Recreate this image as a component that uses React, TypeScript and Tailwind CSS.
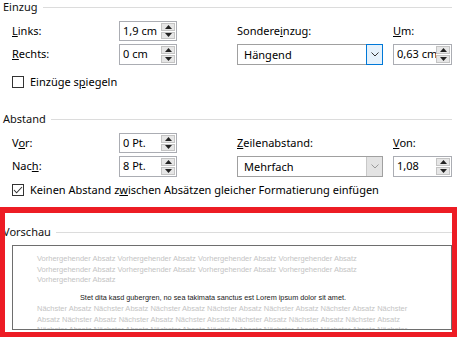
import React from "react";

const ui = "font-['Noto_Sans','Liberation_Sans',sans-serif]";

function GroupHeader({ title }: { title: string }) {
  return (
    <div className="flex items-center h-[14px]">
      <span className="pl-[3px] pr-[5px] leading-[14px] text-[#111]">{title}</span>
      <div className="flex-1 h-px bg-[#dcdcdc]" />
    </div>
  );
}

function Arrow({ up }: { up?: boolean }) {
  return (
    <svg width="7" height="4" viewBox="0 0 7 4">
      <polygon points={up ? "0,4 7,4 3.5,0" : "0,0 7,0 3.5,4"} fill="#222" />
    </svg>
  );
}

function SpinBox({ value }: { value: string }) {
  return (
    <div className="h-full flex border border-[#abadb3] bg-white">
      <span className="flex-1 pl-[3px] leading-[18px] whitespace-nowrap overflow-hidden">{value}</span>
      <div className="w-[15px] flex flex-col gap-px py-px pr-px">
        <div className="flex-1 flex items-center justify-center bg-[#e6e6e6] border border-[#c4c4c4]">
          <Arrow up />
        </div>
        <div className="flex-1 flex items-center justify-center bg-[#e6e6e6] border border-[#c4c4c4]">
          <Arrow />
        </div>
      </div>
    </div>
  );
}

function Chevron({ color }: { color: string }) {
  return (
    <svg width="8" height="5" viewBox="0 0 8 5">
      <polyline points="0.5,0.5 4,4 7.5,0.5" fill="none" stroke={color} strokeWidth="1" />
    </svg>
  );
}

function Dropdown({ value, active }: { value: string; active?: boolean }) {
  return (
    <div className="h-full flex border border-[#a0a0a0] bg-white">
      <span className="flex-1 pl-[6px] leading-[19px]">{value}</span>
      {active ? (
        <div className="w-[17px] -my-px -mr-px flex items-center justify-center bg-[#e5f1fb] border border-[#0078d7]">
          <Chevron color="#333" />
        </div>
      ) : (
        <div className="w-[16px] flex items-center justify-center bg-[#e3e3e3] border-l border-[#c8c8c8]">
          <Chevron color="#999" />
        </div>
      )}
    </div>
  );
}

function Checkbox({ checked, children }: { checked?: boolean; children: React.ReactNode }) {
  return (
    <div className="flex items-center pl-[12px] h-[12px] gap-[6px]">
      <div className="w-[12px] h-[12px] border border-[#333] bg-white flex items-center justify-center">
        {checked && (
          <svg width="10" height="8" viewBox="0 0 10 8">
            <polyline points="1,4 3.6,6.8 9,1" fill="none" stroke="#333" strokeWidth="1.1" />
          </svg>
        )}
      </div>
      <span className="leading-[14px] whitespace-nowrap">{children}</span>
    </div>
  );
}

const cols = "grid grid-cols-[107px_58px_60px_146px_10px_59px] pl-[12px] items-center";

const prev = "Vorhergehender Absatz Vorhergehender Absatz Vorhergehender Absatz Vorhergehender Absatz";
const next1 = "Nächster Absatz Nächster Absatz Nächster Absatz Nächster Absatz Nächster Absatz Nächster Absatz Nächster";
const next2 = "Absatz Nächster Absatz Nächster Absatz Nächster Absatz Nächster Absatz Nächster Absatz Nächster Absatz";

export default function App() {
  return (
    <div className={`relative w-[457px] h-[342px] overflow-hidden bg-white text-[11px] text-black ${ui}`}>
      <div className="w-[452px]">
        <GroupHeader title="Einzug" />
        <div className={`${cols} mt-[7px] grid-rows-[20px_21px] gap-y-[3px]`}>
          <span>
            <u>L</u>inks:
          </span>
          <SpinBox value="1,9 cm" />
          <div />
          <span>
            Sondere<u>i</u>nzug:
          </span>
          <div />
          <span>
            <u>U</u>m:
          </span>
          <span>
            <u>R</u>echts:
          </span>
          <SpinBox value="0 cm" />
          <div />
          <Dropdown value="Hängend" active />
          <div />
          <SpinBox value="0,63 cm" />
        </div>
        <div className="mt-[11px]">
          <Checkbox>
            Einzüge s<u>p</u>iegeln
          </Checkbox>
        </div>

        <div className="mt-[24px]">
          <GroupHeader title="Abstand" />
        </div>
        <div className={`${cols} mt-[7px] grid-rows-[20px_21px] gap-y-[3px]`}>
          <span>
            V<u>o</u>r:
          </span>
          <SpinBox value="0 Pt." />
          <div />
          <span>
            <u>Z</u>eilenabstand:
          </span>
          <div />
          <span>
            <u>V</u>on:
          </span>
          <span>
            Nac<u>h</u>:
          </span>
          <SpinBox value="8 Pt." />
          <div />
          <Dropdown value="Mehrfach" />
          <div />
          <SpinBox value="1,08" />
        </div>
        <div className="mt-[7px]">
          <Checkbox checked>
            Keinen Abstand z<u>w</u>ischen Absätzen gleicher Formatierung einfügen
          </Checkbox>
        </div>

        <div className="mt-[29px]">
          <GroupHeader title="Vorschau" />
        </div>
        <div className="ml-[12px] mt-[6px] h-[85px] border border-[#6e6e6e] overflow-hidden pl-[24px] pt-[8px] text-[7.5px] leading-[10.7px] font-['Liberation_Sans',sans-serif] whitespace-nowrap">
          <div className="text-[#c4c4c4]">{prev}</div>
          <div className="text-[#c4c4c4]">{prev}</div>
          <div className="text-[#c4c4c4]">Vorhergehender Absatz</div>
          <div className="mt-[7px] pl-[43px] text-[#1a1a1a] text-[7.3px]">
            Stet dita kasd gubergren, no sea takimata sanctus est Lorem ipsum dolor sit amet.
          </div>
          <div className="text-[#c4c4c4]">{next1}</div>
          <div className="text-[#c4c4c4]">{next2}</div>
          <div className="text-[#c4c4c4]">{next1}</div>
        </div>
      </div>

      <div className="absolute left-0 top-[207px] w-[457px] h-[130px] border-[5px] border-t-[6px] border-[#ed1c24] pointer-events-none" />
    </div>
  );
}
